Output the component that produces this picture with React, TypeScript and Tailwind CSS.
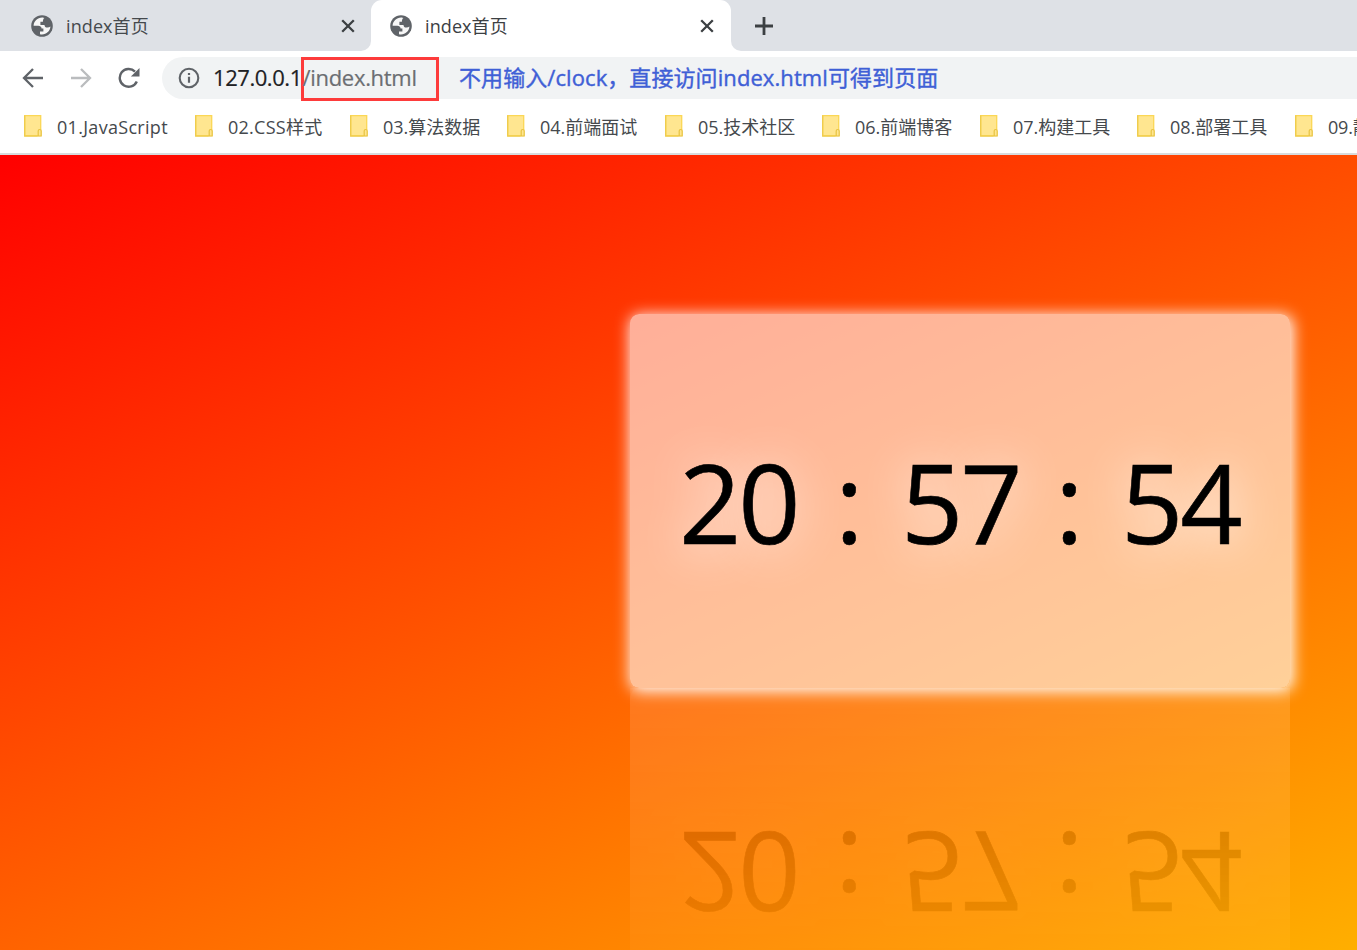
import React from "react";

const bookmarks = [
  { label: "01.JavaScript", width: "w-[171px]", tracking: "tracking-[0.3px]" },
  { label: "02.CSS样式", width: "w-[155px]", tracking: "tracking-[0.25px]" },
  { label: "03.算法数据", width: "w-[157px]", tracking: "tracking-[0px]" },
  { label: "04.前端面试", width: "w-[158px]", tracking: "tracking-[0px]" },
  { label: "05.技术社区", width: "w-[157px]", tracking: "tracking-[0px]" },
  { label: "06.前端博客", width: "w-[158px]", tracking: "tracking-[0px]" },
  { label: "07.构建工具", width: "w-[157px]", tracking: "tracking-[0px]" },
  { label: "08.部署工具", width: "w-[158px]", tracking: "tracking-[0px]" },
  { label: "09.静", width: "w-[158px]", tracking: "tracking-[-0.2px]" },
];

function Globe() {
  return (
    <svg width="22" height="22" viewBox="0 0 22 22" className="shrink-0">
      <circle cx="11" cy="11" r="10.8" fill="#5f6368" />
      <path
        d="M11.6 2.6C6.6 2.4 2.8 6.2 2.6 10.8h4.6c2 0 3.2 1 3.4 2.6h1.8v3.2H9v2.6c5.400 1.200 10.300-2.800 10.400-7.700-.8.7-1.700 1-2.900 1-2 0-3-1-3-2.600H9.400V6.700h2.500c0-1.700.4-3.200 1.500-3.800z"
        fill="#fff"
        fillOpacity="0.95"
      />
    </svg>
  );
}

function Close() {
  return (
    <svg width="14" height="14" viewBox="0 0 14 14" className="shrink-0" stroke="#3c4043" strokeWidth="2.3">
      <path d="M1.200 1.200l11.600 11.600M12.800 1.200L1.200 12.800" />
    </svg>
  );
}

function Folder() {
  return (
    <svg width="19" height="22" viewBox="0 0 19 22" className="relative -top-px shrink-0">
      <path d="M.7.7h16v20H.7z" fill="#ffe690" stroke="#fbd755" strokeWidth="1.300" />
      <path d="M.7.5v20.600h13" fill="none" stroke="#eecb4d" strokeWidth="1.200" />
      <path d="M14.200 21v-5q0-1.500 1.500-1.500t1.500 1.500v5z" fill="#ffe690" stroke="#e8c341" strokeWidth="1.200" />
    </svg>
  );
}

function Arrow({ color, flip }: { color: string; flip?: boolean }) {
  return (
    <svg width="22" height="22" viewBox="0 0 22 22" className={flip ? "shrink-0 -scale-x-100" : "shrink-0"}>
      <path d="M21 11H2.500M11 2L2 11l9 9" fill="none" stroke={color} strokeWidth="2.300" />
    </svg>
  );
}

export default function App() {
  return (
    <div className="flex h-[950px] w-[1357px] flex-col overflow-hidden bg-white font-['Open_Sans','Noto_Sans_CJK_SC',sans-serif]">
      <header className="h-[155px] shrink-0 border-b-2 border-[#d8dbdd]">
        <div className="flex h-[51px] bg-white">
          <div className="flex w-[371px] items-center rounded-br-[10px] bg-[#dee1e6] pt-px pr-[16px] pl-[31px]">
            <Globe />
            <span className="ml-[13px] text-[18px] tracking-[0.1px] text-[#45494d]">index首页</span>
            <div className="ml-auto">
              <Close />
            </div>
          </div>
          <div className="w-[360px] bg-[#dee1e6]">
            <div className="flex h-full items-center rounded-t-[11px] bg-white pt-px pr-[17.5px] pl-[19px]">
              <Globe />
              <span className="ml-[13px] text-[18px] tracking-[0.1px] text-[#3c4043]">index首页</span>
              <div className="ml-auto">
                <Close />
              </div>
            </div>
          </div>
          <div className="flex grow items-center rounded-bl-[10px] bg-[#dee1e6] pl-[23.5px]">
            <svg width="18" height="18" viewBox="0 0 18 18" stroke="#3c4043" strokeWidth="2.800">
              <path d="M9 0v18M0 9h18" />
            </svg>
          </div>
        </div>

        <div className="flex h-[54px] items-center pl-[22px]">
          <Arrow color="#5f6368" />
          <div className="ml-[26px] flex">
            <Arrow color="#babcbe" flip />
          </div>
          <svg width="22" height="22" viewBox="0 0 22 22" className="ml-[26px] shrink-0">
            <path d="M18.800 14.500A8.900 8.900 0 1 1 17 4.600" fill="none" stroke="#5f6368" strokeWidth="2.400" />
            <path d="M21.500 1v8.600h-8.600z" fill="#5f6368" />
          </svg>
          <div className="ml-[22px] flex h-[42px] grow items-center rounded-l-full bg-[#f1f3f4] pl-[16px]">
            <svg width="22" height="22" viewBox="0 0 22 22" className="shrink-0">
              <circle cx="11" cy="11" r="9.300" fill="none" stroke="#5f6368" strokeWidth="2.100" />
              <path d="M11 9.700v6M11 6v2.100" stroke="#5f6368" strokeWidth="2.200" />
            </svg>
            <span className="ml-[13px] w-[88px] pb-[2px] text-[22px] tracking-[-0.45px] whitespace-nowrap text-[#202124] [-webkit-text-stroke:0.2px]">
              127.0.0.1
            </span>
            <div className="mt-[2px] flex h-[44px] w-[138px] shrink-0 items-center border-3 border-[#fd3b3b] pb-[3px] text-[22px] tracking-[-0.3px] text-[#6b6e72] [-webkit-text-stroke:0.2px]">
              <span className="-ml-[1.5px]">/index.html</span>
            </div>
            <span className="ml-[20px] pb-[2px] text-[22px] tracking-[0.08px] whitespace-nowrap text-[#3f5fd6] [-webkit-text-stroke:0.4px]">
              不用输入/clock，直接访问index.html可得到页面
            </span>
          </div>
        </div>

        <nav className="flex h-[44px] items-center overflow-hidden pl-[24px]">
          {bookmarks.map((b) => (
            <div key={b.label} className={`flex shrink-0 items-center ${b.width}`}>
              <Folder />
              <span className={`ml-[14px] text-[18px] whitespace-nowrap text-[#45494d] ${b.tracking}`}>{b.label}</span>
            </div>
          ))}
        </nav>
      </header>

      <main className="h-[865px] w-[1920px] shrink-0 bg-[linear-gradient(to_bottom_right,#ff0000,#ffd700)] pt-[159px] pl-[630px]">
        <div className="flex h-[374px] w-[660px] items-center rounded-[9px] bg-white/60 pl-[49px] text-[109px] leading-none tracking-[-3px] text-black shadow-[1.5px_2px_15px_1px_rgba(255,255,255,1)] [-webkit-box-reflect:below_0_linear-gradient(transparent,rgba(0,0,0,0.200))] [-webkit-text-stroke:0.6px]">
          <span className="w-[156px] [text-shadow:0px_3px_45px_rgba(255,255,255,0.900)]">20</span>
          <span className="w-[66px]">:</span>
          <span className="w-[154px] [text-shadow:0px_3px_45px_rgba(255,255,255,0.900)]">57</span>
          <span className="w-[66px]">:</span>
          <span className="[text-shadow:0px_3px_45px_rgba(255,255,255,0.900)]">54</span>
        </div>
      </main>
    </div>
  );
}
